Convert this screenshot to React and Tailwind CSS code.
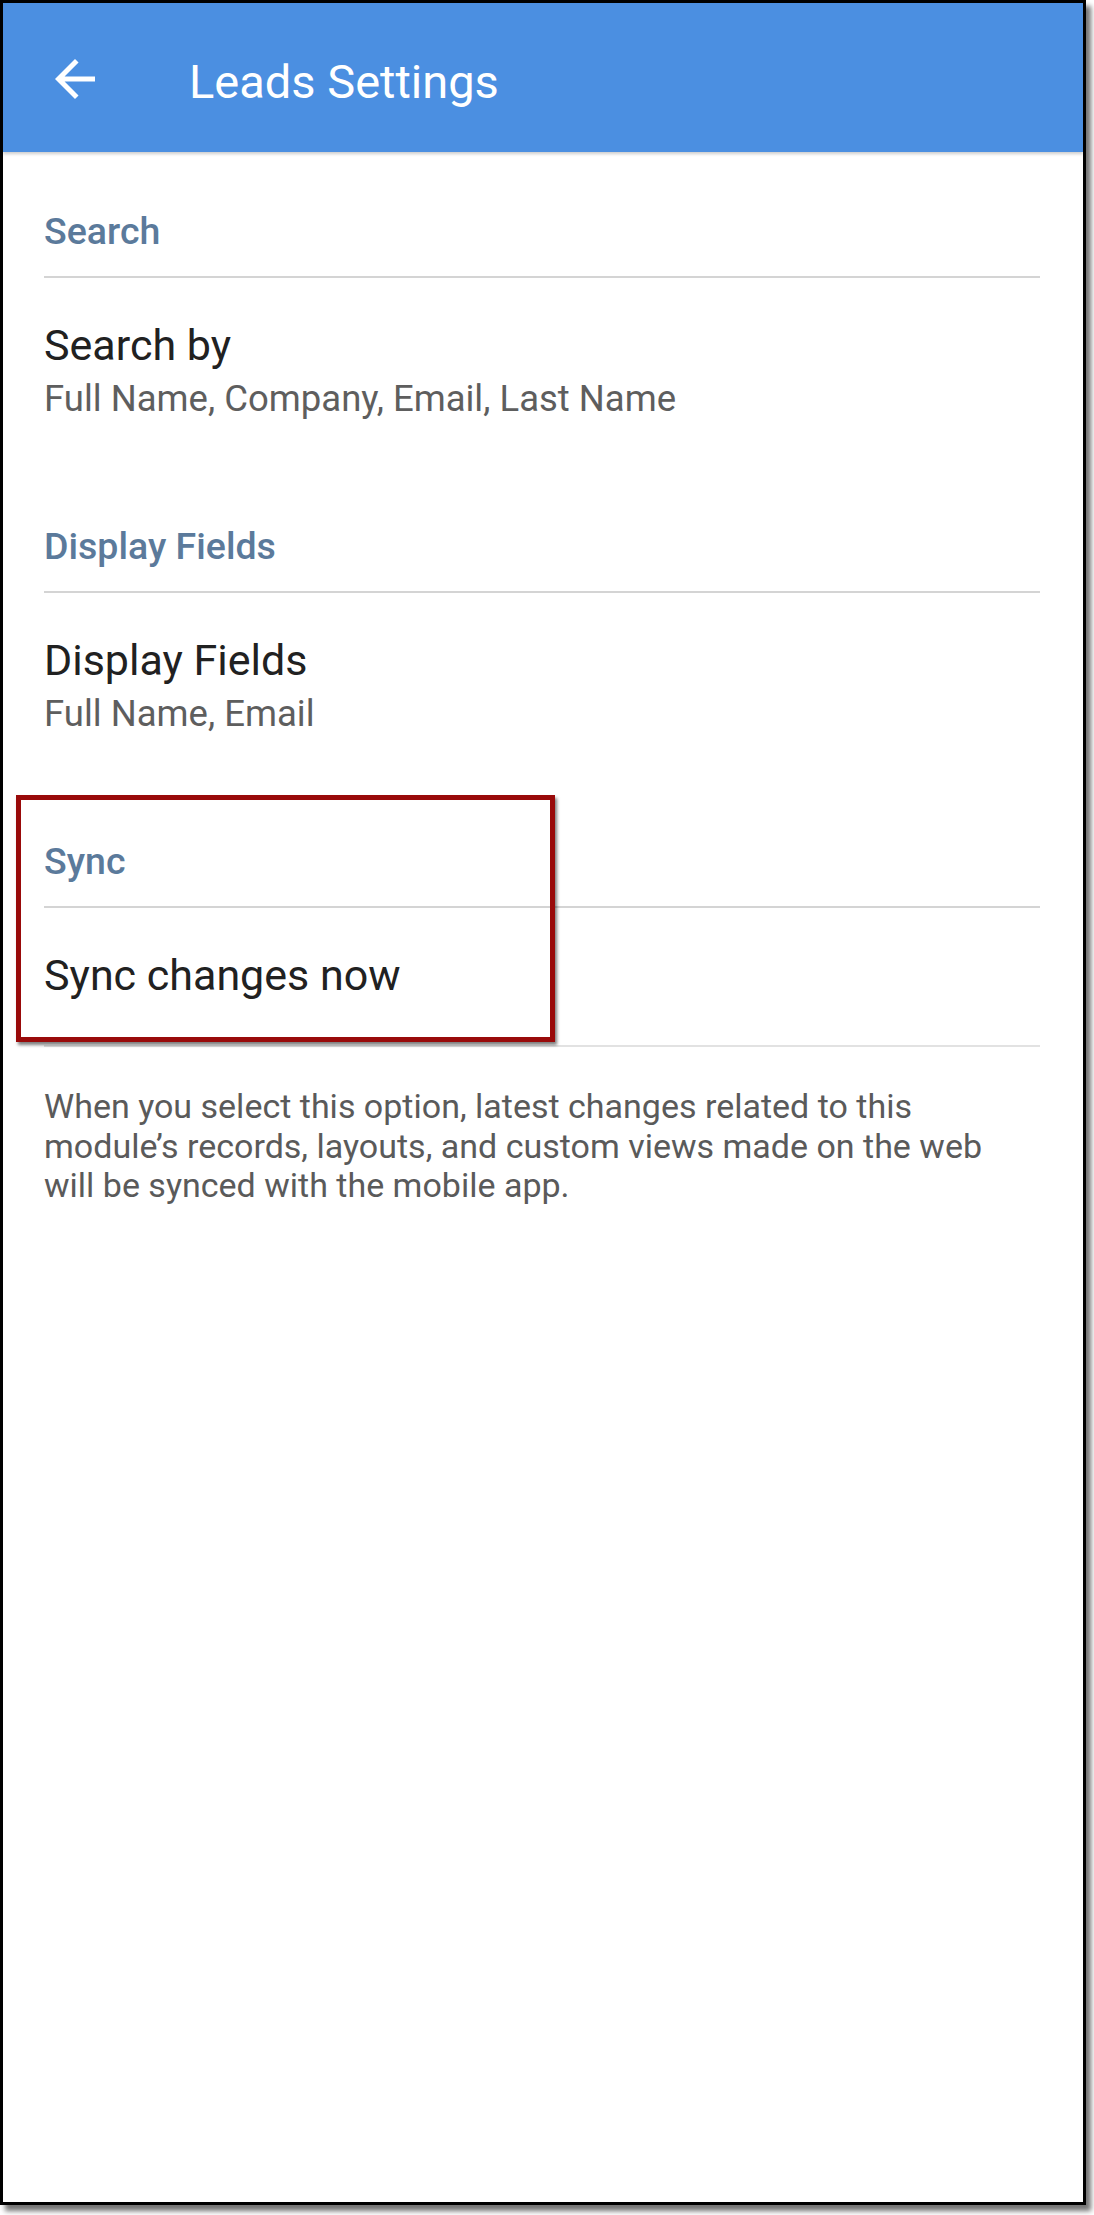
import React from 'react';

// One section of the settings list: blue-grey caption, divider, then rows
function SectionHeader({ label, first }) {
    return (
        <>
            <div
                className={`${first ? 'mt-[57px]' : 'mt-[104px]'} text-[37.5px] leading-[44px] font-medium text-[#5b7a9b]`}
            >
                {label}
            </div>
            <div className="mt-[23px] h-[2px] bg-[#d4d4d4]" />
        </>
    );
}

function SettingRow({ title, value }) {
    return (
        <>
            <div className="mt-[42px] text-[43px] leading-[50px] text-[#212121]">{title}</div>
            {value && <div className="mt-[8px] text-[36.5px] leading-[42px] text-[#5e5e5e]">{value}</div>}
        </>
    );
}

export default function App() {
    return (
        <div className="bg-white w-[1094px] h-[2215px]" style={{ fontFamily: 'Roboto, "Noto Sans", sans-serif' }}>
            <div className="relative w-[1086px] h-[2205px] border-[3px] border-black bg-white shadow-[5px_6px_5px_rgba(0,0,0,0.55)]">
                {/* Toolbar */}
                <div className="flex items-center h-[149px] pl-[42px] pt-[8px] bg-[#4b8fe1] shadow-[0_2px_3px_rgba(0,0,0,0.2)]">
                    <svg viewBox="0 0 24 24" className="w-[60px] h-[60px] -mt-[6px] shrink-0" fill="#ffffff">
                        <path d="M20 11H7.83l5.59-5.59L12 4l-8 8 8 8 1.41-1.41L7.83 13H20v-2z" />
                    </svg>
                    <div className="ml-[84px] text-[47px] leading-none text-white">Leads Settings</div>
                </div>

                {/* Settings list */}
                <div className="flex flex-col pl-[41px] pr-[43px]">
                    <SectionHeader label="Search" first />
                    <SettingRow title="Search by" value="Full Name, Company, Email, Last Name" />

                    <SectionHeader label="Display Fields" />
                    <SettingRow title="Display Fields" value="Full Name, Email" />

                    <SectionHeader label="Sync" />
                    <SettingRow title="Sync changes now" />
                    <div className="mt-[45px] h-[2px] bg-[#e2e2e2]" />

                    <p className="mt-[40px] text-[34px] leading-[39.5px] text-[#5a5a5a] whitespace-nowrap">
                        When you select this option, latest changes related to this
                        <br />
                        module’s records, layouts, and custom views made on the web
                        <br />
                        will be synced with the mobile app.
                    </p>
                </div>

                {/* Highlight annotation */}
                <div className="absolute left-[13px] top-[792px] w-[539px] h-[247px] border-[5px] border-[#990a0a] shadow-[2px_3px_3px_rgba(0,0,0,0.5)]" />
            </div>
        </div>
    );
}
